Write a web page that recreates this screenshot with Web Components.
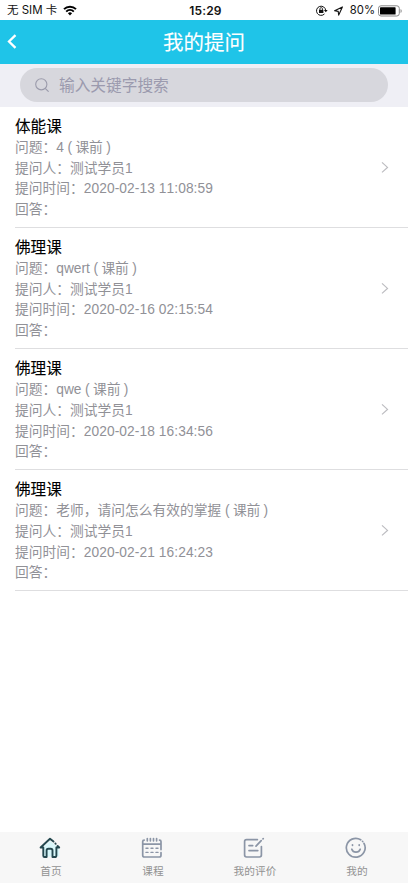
<!DOCTYPE html>
<html lang="zh-CN">
<head>
<meta charset="UTF-8">
<meta name="viewport" content="width=device-width, initial-scale=1">
<title>我的提问</title>
<style>
  html, body {
    margin: 0;
    height: 100%;
    background: #fff;
    overflow: hidden;
    font-family: "Liberation Sans", "Noto Sans CJK SC", sans-serif;
  }
</style>
</head>
<body>
<question-page></question-page>

<script>
// small helper, every component only needs a shadow root with markup
class BaseElement extends HTMLElement {
  constructor() {
    super();
    this.attachShadow({ mode: "open" });
  }

  connectedCallback() {
    this.shadowRoot.innerHTML = this.template();
  }
}

class StatusBar extends BaseElement {
  template() {
    return `
    <style>
    :host {
      display: grid;
      grid-template-columns: 1fr auto 1fr;
      align-items: center;
      height: 20px;
      padding: 1px 6px 0 7px;
      box-sizing: border-box;
      font: 11.5px/19px Inter, "Noto Sans CJK SC", sans-serif;
      color: #111;
      white-space: nowrap;
    }
    .left, .right {
      display: flex;
      align-items: center;
    }
    .left { gap: 6px; }
    .right { justify-content: flex-end; font-size: 11.3px; }
    .time {
      font-weight: 600;
      font-size: 12px;
      letter-spacing: 0.15px;
      padding-left: 2px;
    }
    svg { display: block; }
    .lock { margin-right: 6px; }
    .arrow { margin-right: 7px; }
    .battery { margin-left: 3px; }
    </style>
    <div class="left">
      <span>无 SIM 卡</span>
      <svg width="14" height="11" viewBox="0 0 14 11" fill="none" stroke="#000" stroke-width="2">
        <path d="M1 4.1a8.6 8.6 0 0 1 12 0"/>
        <path d="M3.2 6.6a5.5 5.5 0 0 1 7.6 0"/>
        <path d="M7 10.4 4.9 8.2a3 3 0 0 1 4.2 0z" fill="#000" stroke="none"/>
      </svg>
    </div>
    <span class="time">15:29</span>
    <div class="right">
      <svg class="lock" width="12" height="11" viewBox="0 0 12 11" fill="none" stroke="#111">
        <path d="M8.5 8.9A4.6 4.6 0 1 1 9.7 5.6"/>
        <path d="m7.9 5 1.9 2.2L11.7 5z" fill="#111" stroke="none"/>
        <rect x="3" y="4.8" width="4.4" height="3.2" fill="#111" stroke="none"/>
        <path d="M3.9 5V3.9a1.3 1.3 0 0 1 2.6 0V5" stroke-width=".8"/>
      </svg>
      <svg class="arrow" width="9" height="10" viewBox="0 0 9 10" fill="none" stroke="#111" stroke-width="1.1" stroke-linejoin="round">
        <path d="M8.4.9.6 4.8l3.6.6.5 3.7z"/>
      </svg>
      <span>80%</span>
      <svg class="battery" width="24" height="12" viewBox="0 0 24 12">
        <rect x=".5" y=".8" width="20.8" height="10.2" rx="2.5" fill="#fff" stroke="#888"/>
        <rect x="2" y="2.2" width="15.6" height="7.4" rx=".7" fill="#000"/>
        <path d="M22.5 4v4q1.3-.6 1.3-2T22.5 4z" fill="#999"/>
      </svg>
    </div>
    `;
  }
}

class NavHeader extends BaseElement {
  template() {
    return `
    <style>
    :host {
      display: grid;
      grid-template-columns: 40px 1fr 40px;
      align-items: center;
      height: 43.5px;
      background: #1fc4e8;
      color: #fff;
    }
    svg { display: block; margin-left: 7px; margin-top: -1px; }
    h1 {
      margin: 0;
      padding-top: 2px;
      text-align: center;
      font-size: 20.5px;
      line-height: 41px;
      font-weight: 400;
      -webkit-text-stroke: 0.1px #fff;
    }
    </style>
    <svg width="10" height="15" viewBox="0 0 10 15" fill="none" stroke="#fff" stroke-width="2.3">
      <path d="M8.5 1.2 2 7.5l6.5 6.3"/>
    </svg>
    <h1><slot></slot></h1>
    `;
  }
}

class SearchBox extends BaseElement {
  template() {
    return `
    <style>
    :host {
      display: block;
      height: 43px;
      padding: 4.5px 20px 5px;
      box-sizing: border-box;
      background: #efeff5;
    }
    .field {
      display: flex;
      align-items: center;
      gap: 10px;
      height: 33.5px;
      padding-left: 15px;
      border-radius: 17px;
      background: #d7d7dd;
      color: #9b9aae;
      font-size: 15.7px;
      line-height: 31px;
    }
    .text { padding-top: 2px; }
    </style>
    <div class="field">
      <svg width="14" height="15" viewBox="0 0 14 15" fill="none" stroke="#9b9bab" stroke-width="1.1">
        <circle cx="6.3" cy="7.3" r="5.6"/>
        <path d="m10.2 11.4 3.4 3.3"/>
      </svg>
      <span class="text"><slot></slot></span>
    </div>
    `;
  }
}

class QuestionItem extends BaseElement {
  template() {
    return `
    <style>
    :host {
      display: flex;
      align-items: center;
      height: 121.1px;
      margin-left: 15px;
      padding-right: 19px;
      box-sizing: border-box;
      border-bottom: 1px solid #dedee0;
    }
    .info {
      flex: 1;
      padding-top: 3.6px;
      color: #919197;
      font-size: 13.75px;
      line-height: 20.6px;
      white-space: nowrap;
    }
    h2 {
      margin: 0;
      font-size: 15.6px;
      line-height: 22px;
      font-weight: 400;
      color: #000;
      -webkit-text-stroke: 0.1px #000;
    }
    p { margin: 0; }
    .date { letter-spacing: 0.08px; font-kerning: none; }
    .stage { letter-spacing: -0.2px; }
    </style>
    <div class="info">
      <h2>${this.getAttribute("course")}</h2>
      <p>问题：<slot></slot><span class="stage"> ( 课前 )</span></p>
      <p>提问人：测试学员1</p>
      <p>提问时间：<span class="date">${this.getAttribute("time")}</span></p>
      <p>回答：</p>
    </div>
    <svg width="8" height="12" viewBox="0 0 8 12" fill="none" stroke="#bcbcc0" stroke-width="1.2">
      <path d="m1 1.4 5.5 5L1 11.4"/>
    </svg>
    `;
  }
}

class TabItem extends BaseElement {
  template() {
    return `
    <style>
    :host {
      display: flex;
      flex-direction: column;
      align-items: center;
      flex: 1;
      padding-top: 5px;
      color: #929292;
      font-size: 10.7px;
      line-height: 16px;
    }
    .label { margin-top: 4px; }
    ::slotted(svg) { display: block; margin-right: 2px; }
    </style>
    <slot name="icon"></slot>
    <span class="label"><slot></slot></span>
    `;
  }
}

class TabBar extends BaseElement {
  template() {
    return `
    <style>
    :host {
      display: flex;
      height: 51px;
      background: #f7f7f7;
    }
    svg {
      fill: none;
      stroke: #8b95a6;
      stroke-width: 1.7;
      stroke-linecap: round;
      stroke-linejoin: round;
    }
    </style>
    <tab-item>
      <svg slot="icon" width="22" height="22" viewBox="0 0 22 22">
        <path d="M4 10.5 11 4l9.2 7v8.5H5z" fill="#d9f8fb" stroke="none"/>
        <path stroke="#24484f" stroke-width="1.9" d="M14.5 4.6 11 1.7 1.6 10.5h2.7v8.2q0 1.3 1.3 1.3h2v-6.5q0-1.7 1.7-1.7h2.5q1.7 0 1.7 1.7V20h2.2q1.7 0 1.7-1.6v-7.9h2.8L18.6 9M16.4 6.5l.3.3"/>
      </svg>
      首页
    </tab-item>
    <tab-item>
      <svg slot="icon" width="22" height="22" viewBox="0 0 22 22">
        <path d="M20 15.5v2.7q0 1.8-1.8 1.8H3.5q-1.8 0-1.8-1.8V4.6q0-1.5 1.5-1.5M18.5 3.1q1.5 0 1.5 1.5v8M1.7 7.2H20M6.3 1.5v2.3M9.4 1.5v2.3M12.5 1.5v2.3M15.6 1.5v2.3"/>
        <path stroke-width="1.4" d="M5 11.3h2M10 11.3h2M15 11.3h2M5 15.4h2M10 15.4h2M15 15.4h2"/>
      </svg>
      课程
    </tab-item>
    <tab-item>
      <svg slot="icon" width="22" height="22" viewBox="0 0 22 22">
        <path d="M14.4 2.6H3.5q-1.9 0-1.9 1.9v13.6q0 1.9 1.9 1.9h13q1.9 0 1.9-1.9V9.5M6 8.6h3.7M6 13.6h8.8M13 9.2l5.2-5.5M20 1.9l.2-.2"/>
      </svg>
      我的评价
    </tab-item>
    <tab-item>
      <svg slot="icon" width="22" height="22" viewBox="0 0 22 22">
        <path d="M15.7 2.8A9.4 9.4 0 1 0 19 6.3M17.6 4.4l.1.1M6.8 12.2q1 3 4.2 3t4.2-3M7.5 7.8v.5M14.2 7.8v.5"/>
      </svg>
      我的
    </tab-item>
    `;
  }
}

class QuestionPage extends BaseElement {
  template() {
    return `
    <style>
    :host {
      display: flex;
      flex-direction: column;
      height: 100vh;
    }
    main { flex: 1; }
    </style>
    <status-bar></status-bar>
    <nav-header>我的提问</nav-header>
    <search-box>输入关键字搜索</search-box>
    <main>
      <question-item course="体能课" time="2020-02-13 11:08:59">4</question-item>
      <question-item course="佛理课" time="2020-02-16 02:15:54">qwert</question-item>
      <question-item course="佛理课" time="2020-02-18 16:34:56">qwe</question-item>
      <question-item course="佛理课" time="2020-02-21 16:24:23">老师，请问怎么有效的掌握</question-item>
    </main>
    <tab-bar></tab-bar>
    `;
  }
}

customElements.define("status-bar", StatusBar);
customElements.define("nav-header", NavHeader);
customElements.define("search-box", SearchBox);
customElements.define("question-item", QuestionItem);
customElements.define("tab-item", TabItem);
customElements.define("tab-bar", TabBar);
customElements.define("question-page", QuestionPage);
</script>
</body>
</html>
